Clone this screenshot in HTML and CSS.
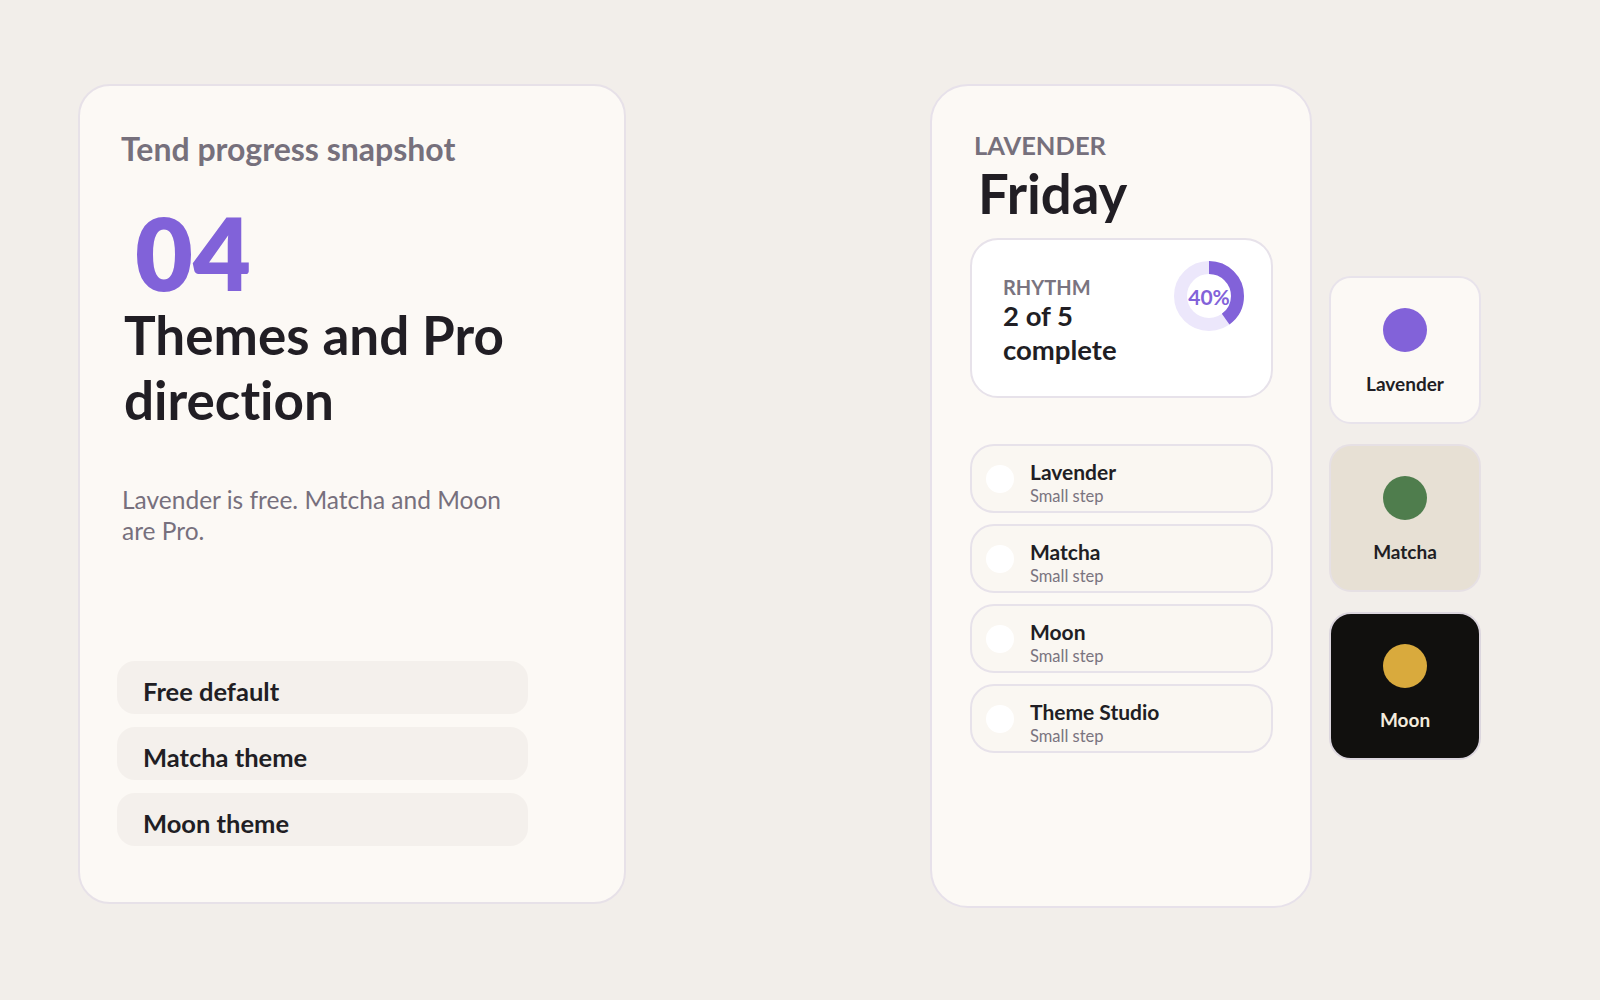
FILE: index.html
```html
<!DOCTYPE html>
<html lang="en">
<head>
<meta charset="utf-8">
<title>Tend progress snapshot</title>
<link rel="stylesheet" href="styles.css">
</head>
<body>
<main class="stage">
  <section class="card snapshot">
    <p class="eyebrow">Tend progress snapshot</p>
    <div class="num">04</div>
    <h1 class="title">Themes and Pro direction</h1>
    <p class="lede">Lavender is free. Matcha and Moon are Pro.</p>
    <ul class="pills">
      <li class="pill">Free default</li>
      <li class="pill">Matcha theme</li>
      <li class="pill">Moon theme</li>
    </ul>
  </section>

  <div class="right">
    <section class="phone">
      <p class="theme-name">LAVENDER</p>
      <h2 class="day">Friday</h2>
      <div class="rhythm">
        <div class="rh-text">
          <p class="rh-label">RHYTHM</p>
          <p class="rh-value">2 of 5 complete</p>
        </div>
        <div class="donut">
          <svg viewBox="0 0 70 70" width="70" height="70">
            <circle cx="35" cy="35" r="28.5" fill="none" stroke="#ece7fb" stroke-width="13"/>
            <circle cx="35" cy="35" r="28.5" fill="none" stroke="#8262d9" stroke-width="13"
                    stroke-dasharray="71.63 179.07" transform="rotate(-90 35 35)"/>
          </svg>
          <span class="donut-label">40%</span>
        </div>
      </div>
      <ul class="steps">
        <li class="step"><span class="dot"></span><div class="step-text"><p class="step-title">Lavender</p><p class="step-sub">Small step</p></div></li>
        <li class="step"><span class="dot"></span><div class="step-text"><p class="step-title">Matcha</p><p class="step-sub">Small step</p></div></li>
        <li class="step"><span class="dot"></span><div class="step-text"><p class="step-title">Moon</p><p class="step-sub">Small step</p></div></li>
        <li class="step"><span class="dot"></span><div class="step-text"><p class="step-title">Theme Studio</p><p class="step-sub">Small step</p></div></li>
      </ul>
    </section>

    <div class="swatches">
      <div class="swatch sw-lav"><span class="sw-dot"></span><span class="sw-label">Lavender</span></div>
      <div class="swatch sw-matcha"><span class="sw-dot"></span><span class="sw-label">Matcha</span></div>
      <div class="swatch sw-moon"><span class="sw-dot"></span><span class="sw-label">Moon</span></div>
    </div>
  </div>
</main>
</body>
</html>
```

FILE: styles.css
```css
* { box-sizing: border-box; }

html, body {
  margin: 0;
  padding: 0;
  background: #f2eeea;
}

body {
  font-family: Lato, "Noto Sans", "Liberation Sans", sans-serif;
  font-variant-ligatures: none;
  color: #211e24;
  width: 1600px;
  height: 1000px;
  overflow: hidden;
}

p, h1, h2, ul { margin: 0; padding: 0; }
ul { list-style: none; }

.stage {
  display: flex;
  align-items: flex-start;
  gap: 304px;
  padding: 84px 0 0 78px;
}

/* ---------- left card ---------- */
.card {
  width: 548px;
  height: 820px;
  background: #fcf9f5;
  border: 2px solid #e7e1e8;
  border-radius: 32px;
  padding: 44px 37px 56px;
  display: flex;
  flex-direction: column;
}

.eyebrow {
  padding-left: 4px;
  font-size: 32px;
  line-height: 38px;
  font-weight: 700;
  color: #76707c;
}

.num {
  margin-top: 35px;
  margin-left: 18px;
  font-size: 100px;
  line-height: 99px;
  font-weight: 800;
  color: #8162d9;
}

.title {
  padding-left: 7px;
  font-size: 53px;
  line-height: 65px;
  font-weight: 700;
  color: #211e24;
}

.lede {
  margin-top: 52px;
  padding-left: 5px;
  max-width: 400px;
  font-size: 24.5px;
  line-height: 31px;
  font-weight: 400;
  color: #77707d;
}

.pills {
  margin-top: auto;
  width: 411px;
  display: flex;
  flex-direction: column;
  gap: 13px;
}

.pill {
  height: 53px;
  padding: 8px 0 0 26px;
  line-height: 45px;
  font-size: 25.5px;
  font-weight: 700;
  background: #f4f0ec;
  border-radius: 18px;
  color: #211e24;
}

/* ---------- right group ---------- */
.right {
  display: flex;
  align-items: flex-start;
  gap: 17px;
}

.phone {
  width: 382px;
  height: 824px;
  background: #fcf9f5;
  border: 2px solid #e7e1ea;
  border-radius: 38px;
  padding: 43px 37px 0 38px;
}

.theme-name {
  padding-left: 4px;
  font-size: 25.5px;
  line-height: 32px;
  font-weight: 700;
  color: #76707c;
}

.day {
  margin-top: 3px;
  padding-left: 8px;
  font-size: 54.5px;
  line-height: 58px;
  font-weight: 700;
  color: #211e24;
}

.rhythm {
  margin-top: 16px;
  height: 160px;
  background: #ffffff;
  border: 2px solid #e7e2ea;
  border-radius: 28px;
  padding: 35px 27px 0 31px;
  display: flex;
  justify-content: space-between;
  align-items: flex-start;
}

.rh-label {
  font-size: 20px;
  line-height: 24px;
  font-weight: 700;
  color: #7a7480;
}

.rh-value {
  max-width: 150px;
  font-size: 27.5px;
  line-height: 34px;
  font-weight: 700;
  color: #211e24;
}

.donut {
  position: relative;
  width: 70px;
  height: 70px;
  margin-top: -14px;
}

.donut svg { display: block; }

.donut-label {
  position: absolute;
  inset: 0;
  display: flex;
  align-items: center;
  justify-content: center;
  font-size: 21px;
  font-weight: 700;
  color: #8262d9;
}

.steps {
  margin-top: 46px;
  display: flex;
  flex-direction: column;
  gap: 11px;
}

.step {
  height: 69px;
  display: flex;
  align-items: center;
  background: #faf7f2;
  border: 2px solid #e7e2ea;
  border-radius: 24px;
  padding-left: 14px;
}

.dot {
  width: 28px;
  height: 28px;
  border-radius: 50%;
  background: #ffffff;
  margin-right: 16px;
  flex: none;
}

.step-text { margin-top: 10px; }

.step-title {
  font-size: 21px;
  line-height: 22px;
  font-weight: 700;
  color: #211e24;
}

.step-sub {
  margin-top: 3px;
  font-size: 16.5px;
  line-height: 20px;
  font-weight: 400;
  color: #7a7480;
}

/* ---------- swatches ---------- */
.swatches {
  margin-top: 192px;
  width: 152px;
  display: flex;
  flex-direction: column;
  gap: 20px;
}

.swatch {
  height: 148px;
  border: 2px solid #e8e3eb;
  border-radius: 22px;
  padding-top: 30px;
  display: flex;
  flex-direction: column;
  align-items: center;
}

.sw-dot {
  width: 44px;
  height: 44px;
  border-radius: 50%;
}

.sw-label {
  margin-top: 21px;
  font-size: 19px;
  line-height: 22px;
  font-weight: 700;
}

.sw-lav { background: #fcf9f5; }
.sw-lav .sw-dot { background: #8262d9; }
.sw-lav .sw-label { color: #211e24; }

.sw-matcha { background: #e7e0d4; border-color: #e6e0e4; }
.sw-matcha .sw-dot { background: #4f7d4d; }
.sw-matcha .sw-label { color: #211e24; }

.sw-moon { background: #11100e; border-color: #dcd6de; }
.sw-moon .sw-dot { background: #d9aa3d; }
.sw-moon .sw-label { color: #f3ebdd; }
```
